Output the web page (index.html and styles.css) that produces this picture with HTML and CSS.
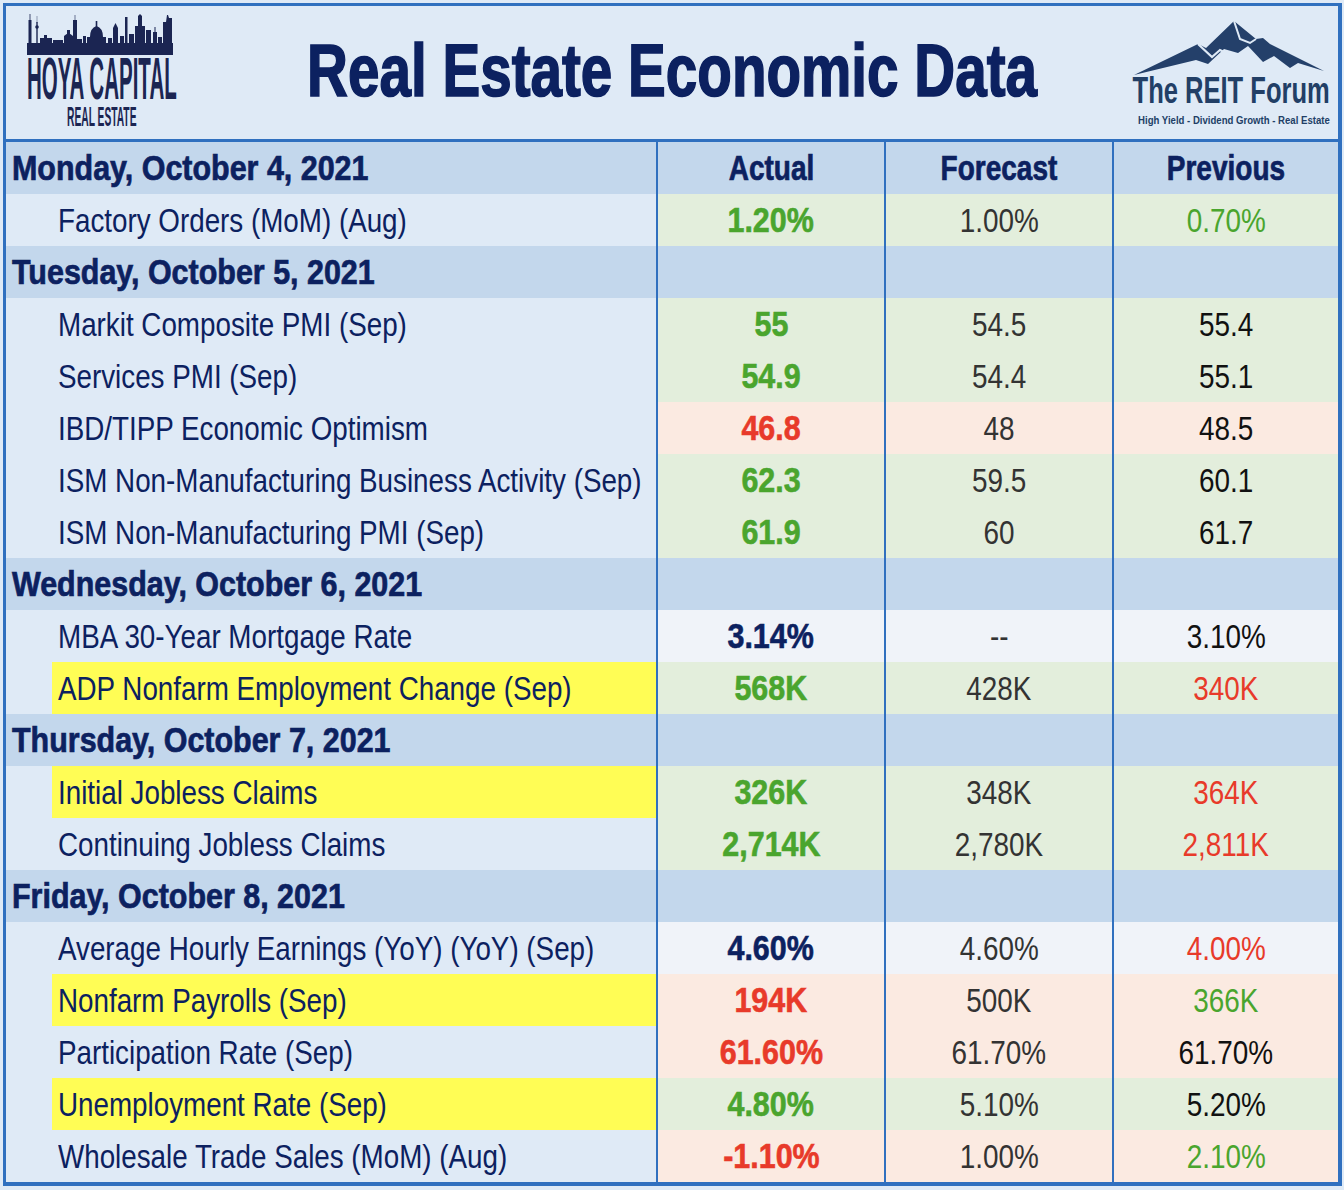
FILE: index.html
```html
<!DOCTYPE html>
<html lang="en">
<head>
<meta charset="utf-8">
<title>Real Estate Economic Data</title>
<link rel="stylesheet" href="styles.css">
</head>
<body>
<div class="sheet">
  <header class="top">
    <div class="hoya">
      <svg class="skyline" viewBox="0 0 146 42" width="146" height="42" aria-hidden="true">
        <g fill="#1b2552">
          <rect x="0" y="29" width="146" height="12"/>
          <rect x="1.5" y="6" width="3" height="24"/>
          <rect x="2.6" y="0" width="0.8" height="7"/>
          <rect x="9.3" y="8" width="1.4" height="22"/>
          <circle cx="10" cy="13" r="1.8"/>
          <rect x="9.8" y="2" width="0.4" height="7"/>
          <rect x="13" y="24" width="12" height="6"/>
          <rect x="17" y="21" width="3" height="4"/>
          <rect x="26" y="26" width="10" height="4"/>
          <rect x="37" y="22" width="9" height="8"/>
          <path d="M37 22 Q41.5 17 46 22 Z"/>
          <rect x="47" y="25" width="8" height="5"/>
          <rect x="56" y="22" width="3" height="8"/>
          <rect x="40" y="16" width="3" height="7"/>
          <rect x="46" y="6" width="4" height="24"/>
          <rect x="47.7" y="1" width="0.6" height="6"/>
          <path d="M60 29 L60 23 L63 23 Q63 14 69.5 12 Q76 14 76 23 L79 23 L79 29 Z"/>
          <rect x="68.7" y="7" width="1.6" height="6"/>
          <rect x="81" y="24" width="4" height="6"/>
          <polygon points="86,29 86,14 88.5,9 91,14 91,29"/>
          <rect x="93" y="22" width="4" height="8"/>
          <rect x="98" y="3" width="2.5" height="27"/>
          <rect x="102" y="20" width="5" height="10"/>
          <polygon points="108,29 108,12 111,12 111,2 113,0 115,2 115,12 118,12 118,29"/>
          <rect x="119" y="16" width="5" height="14"/>
          <rect x="126" y="18" width="4" height="12"/>
          <rect x="127.5" y="13" width="1" height="6"/>
          <rect x="131" y="23" width="4" height="7"/>
          <polygon points="136,29 136,8 139,8 140,1 141,1 142,4 145,4 145,29"/>
        </g>
      </svg>
      <div class="hoya-name"><span class="t">HOYA CAPITAL</span></div>
      <div class="hoya-sub"><span class="t">REAL ESTATE</span></div>
    </div>
    <h1 class="title"><span class="t">Real Estate Economic Data</span></h1>
    <div class="reit">
      <svg class="mountain" viewBox="0 0 194 58" width="194" height="58" aria-hidden="true">
        <polygon fill="#24406a" points="2,56 66,25 74,29 102,2 124,20 131,19 138,25 192,52 166,44 158,49 142,37 131,43 116,27 106,34 92,30 76,45 64,41"/>
        <polyline fill="none" stroke="#dfeaf6" stroke-width="2.2" points="66,25 80,38 88,31 98,36"/>
        <polyline fill="none" stroke="#dfeaf6" stroke-width="2" points="102,2 108,20 118,24 124,20"/>
      </svg>
      <div class="reit-name"><span class="t">The REIT Forum</span></div>
      <div class="reit-tag"><span class="t">High Yield - Dividend Growth - Real Estate</span></div>
    </div>
  </header>

  <div class="grid">
    <div class="cell day"><span class="t">Monday, October 4, 2021</span></div>
    <div class="cell day hd"><span class="t">Actual</span></div>
    <div class="cell day hd"><span class="t">Forecast</span></div>
    <div class="cell day hd"><span class="t">Previous</span></div>

    <div class="cell label"><span class="t">Factory Orders (MoM) (Aug)</span></div>
    <div class="cell v pos act"><span class="t">1.20%</span></div>
    <div class="cell v pos fc"><span class="t">1.00%</span></div>
    <div class="cell v pos pv g"><span class="t">0.70%</span></div>

    <div class="cell day"><span class="t">Tuesday, October 5, 2021</span></div>
    <div class="cell day"></div>
    <div class="cell day"></div>
    <div class="cell day"></div>

    <div class="cell label"><span class="t">Markit Composite PMI (Sep)</span></div>
    <div class="cell v pos act"><span class="t">55</span></div>
    <div class="cell v pos fc"><span class="t">54.5</span></div>
    <div class="cell v pos pv"><span class="t">55.4</span></div>

    <div class="cell label"><span class="t">Services PMI (Sep)</span></div>
    <div class="cell v pos act"><span class="t">54.9</span></div>
    <div class="cell v pos fc"><span class="t">54.4</span></div>
    <div class="cell v pos pv"><span class="t">55.1</span></div>

    <div class="cell label"><span class="t">IBD/TIPP Economic Optimism</span></div>
    <div class="cell v neg act"><span class="t">46.8</span></div>
    <div class="cell v neg fc"><span class="t">48</span></div>
    <div class="cell v neg pv"><span class="t">48.5</span></div>

    <div class="cell label"><span class="t">ISM Non-Manufacturing Business Activity (Sep)</span></div>
    <div class="cell v pos act"><span class="t">62.3</span></div>
    <div class="cell v pos fc"><span class="t">59.5</span></div>
    <div class="cell v pos pv"><span class="t">60.1</span></div>

    <div class="cell label"><span class="t">ISM Non-Manufacturing PMI (Sep)</span></div>
    <div class="cell v pos act"><span class="t">61.9</span></div>
    <div class="cell v pos fc"><span class="t">60</span></div>
    <div class="cell v pos pv"><span class="t">61.7</span></div>

    <div class="cell day"><span class="t">Wednesday, October 6, 2021</span></div>
    <div class="cell day"></div>
    <div class="cell day"></div>
    <div class="cell day"></div>

    <div class="cell label"><span class="t">MBA 30-Year Mortgage Rate</span></div>
    <div class="cell v neu act"><span class="t">3.14%</span></div>
    <div class="cell v neu fc"><span class="t">--</span></div>
    <div class="cell v neu pv"><span class="t">3.10%</span></div>

    <div class="cell label"><div class="hl"><span class="t">ADP Nonfarm Employment Change (Sep)</span></div></div>
    <div class="cell v pos act"><span class="t">568K</span></div>
    <div class="cell v pos fc"><span class="t">428K</span></div>
    <div class="cell v pos pv r"><span class="t">340K</span></div>

    <div class="cell day"><span class="t">Thursday, October 7, 2021</span></div>
    <div class="cell day"></div>
    <div class="cell day"></div>
    <div class="cell day"></div>

    <div class="cell label"><div class="hl"><span class="t">Initial Jobless Claims</span></div></div>
    <div class="cell v pos act"><span class="t">326K</span></div>
    <div class="cell v pos fc"><span class="t">348K</span></div>
    <div class="cell v pos pv r"><span class="t">364K</span></div>

    <div class="cell label"><span class="t">Continuing Jobless Claims</span></div>
    <div class="cell v pos act"><span class="t">2,714K</span></div>
    <div class="cell v pos fc"><span class="t">2,780K</span></div>
    <div class="cell v pos pv r"><span class="t">2,811K</span></div>

    <div class="cell day"><span class="t">Friday, October 8, 2021</span></div>
    <div class="cell day"></div>
    <div class="cell day"></div>
    <div class="cell day"></div>

    <div class="cell label"><span class="t">Average Hourly Earnings (YoY) (YoY) (Sep)</span></div>
    <div class="cell v neu act"><span class="t">4.60%</span></div>
    <div class="cell v neu fc"><span class="t">4.60%</span></div>
    <div class="cell v neu pv r"><span class="t">4.00%</span></div>

    <div class="cell label"><div class="hl"><span class="t">Nonfarm Payrolls (Sep)</span></div></div>
    <div class="cell v neg act"><span class="t">194K</span></div>
    <div class="cell v neg fc"><span class="t">500K</span></div>
    <div class="cell v neg pv g"><span class="t">366K</span></div>

    <div class="cell label"><span class="t">Participation Rate (Sep)</span></div>
    <div class="cell v neg act"><span class="t">61.60%</span></div>
    <div class="cell v neg fc"><span class="t">61.70%</span></div>
    <div class="cell v neg pv"><span class="t">61.70%</span></div>

    <div class="cell label"><div class="hl"><span class="t">Unemployment Rate (Sep)</span></div></div>
    <div class="cell v pos act"><span class="t">4.80%</span></div>
    <div class="cell v pos fc"><span class="t">5.10%</span></div>
    <div class="cell v pos pv"><span class="t">5.20%</span></div>

    <div class="cell label"><span class="t">Wholesale Trade Sales (MoM) (Aug)</span></div>
    <div class="cell v neg act"><span class="t">-1.10%</span></div>
    <div class="cell v neg fc"><span class="t">1.00%</span></div>
    <div class="cell v neg pv g"><span class="t">2.10%</span></div>
  </div>
</div>
</body>
</html>
```

FILE: styles.css
```css
* { box-sizing: border-box; }

html, body {
  margin: 0;
  padding: 0;
  background: #dfeaf6;
}

body {
  font-family: "Liberation Sans", Arial, sans-serif;
  color: #0c2160;
}

.t {
  display: inline-block;
  white-space: nowrap;
  transform-origin: left center;
}

.sheet {
  margin: 3px 0 0 3px;
  width: 1339px;
  border-style: solid;
  border-color: #3070bf;
  border-width: 3px 4px 4px 3px;
  background: #dfeaf6;
}

/* ---------- header ---------- */
.top {
  height: 136px;
  border-bottom: 3px solid #3070bf;
  display: grid;
  grid-template-columns: minmax(0, 1fr) 760px minmax(0, 1fr);
  align-items: start;
}

.hoya {
  justify-self: start;
  margin: 8px 0 0 21px;
  width: 160px;
  display: flex;
  flex-direction: column;
  color: #1b2552;
}

.skyline { display: block; }

.hoya-name {
  margin-top: 1px;
  font-weight: 700;
  font-size: 60px;
  line-height: 44px;
  height: 44px;
}
.hoya-name .t { transform: scaleX(0.342); }

.hoya-sub {
  margin: 6px 0 0 40px;
  font-weight: 700;
  font-size: 28px;
  line-height: 20px;
  height: 20px;
}
.hoya-sub .t { transform: scaleX(0.366); }

.title {
  margin: 28px 0 0 0;
  display: flex;
  justify-content: center;
  font-weight: 700;
  font-size: 74px;
  line-height: 74px;
  color: #0c2160;
}
.title .t {
  transform: scaleX(0.765);
  transform-origin: center;
  -webkit-text-stroke: 1.6px #0c2160;
}

.reit {
  justify-self: end;
  margin: 13px 8px 0 0;
  width: 200px;
  display: flex;
  flex-direction: column;
  align-items: flex-end;
  color: #223f66;
}

.mountain { display: block; margin-right: 4px; }

.reit-name,
.reit-tag {
  width: 100%;
  display: flex;
  justify-content: flex-end;
}
.reit-name .t,
.reit-tag .t { transform-origin: right center; }

.reit-name {
  font-weight: 700;
  font-size: 37px;
  line-height: 28px;
  height: 28px;
}
.reit-name .t { transform: scaleX(0.69); }

.reit-tag {
  margin-top: 9px;
  font-weight: 700;
  font-size: 11.7px;
  line-height: 12px;
  height: 12px;
}
.reit-tag .t { transform: scaleX(0.82); }

/* ---------- table ---------- */
.grid {
  display: grid;
  grid-template-columns: 650px 226px 226px 224px;
  grid-auto-rows: 52px;
  column-gap: 2px;
  background: #3070bf;
}

.cell {
  height: 52px;
  line-height: 52px;
  font-size: 34px;
  white-space: nowrap;
}

.day {
  background: #c3d7ec;
  font-weight: 700;
  font-size: 35px;
  padding-left: 6px;
  color: #0c2160;
}
.day .t {
  transform: scaleX(0.87);
  -webkit-text-stroke: 0.7px #0c2160;
}

.day.hd {
  text-align: center;
  padding-left: 0;
}
.day.hd .t { transform: scaleX(0.8); transform-origin: center; }

.label {
  background: #dfeaf6;
  padding-left: 52px;
  color: #0c2160;
}
.label .t { transform: scaleX(0.817); }

.hl {
  height: 52px;
  margin-left: -6px;
  padding-left: 6px;
  background: #fffd55;
}

.v { text-align: center; }
.v .t { transform: scaleX(0.82); transform-origin: center; }

.pos { background: #e3eedc; }
.neg { background: #fbeae1; }
.neu { background: #f0f3f9; }

.act {
  font-weight: 700;
  font-size: 35px;
}
.act .t {
  transform: scaleX(0.87);
  -webkit-text-stroke: 0.6px currentColor;
}
.pos.act { color: #4aa52e; }
.neg.act { color: #e83a2a; }
.neu.act { color: #0c2160; }

.fc { color: #333333; }
.pv { color: #111111; }
.pv.g { color: #4aa52e; }
.pv.r { color: #e83a2a; }
```
